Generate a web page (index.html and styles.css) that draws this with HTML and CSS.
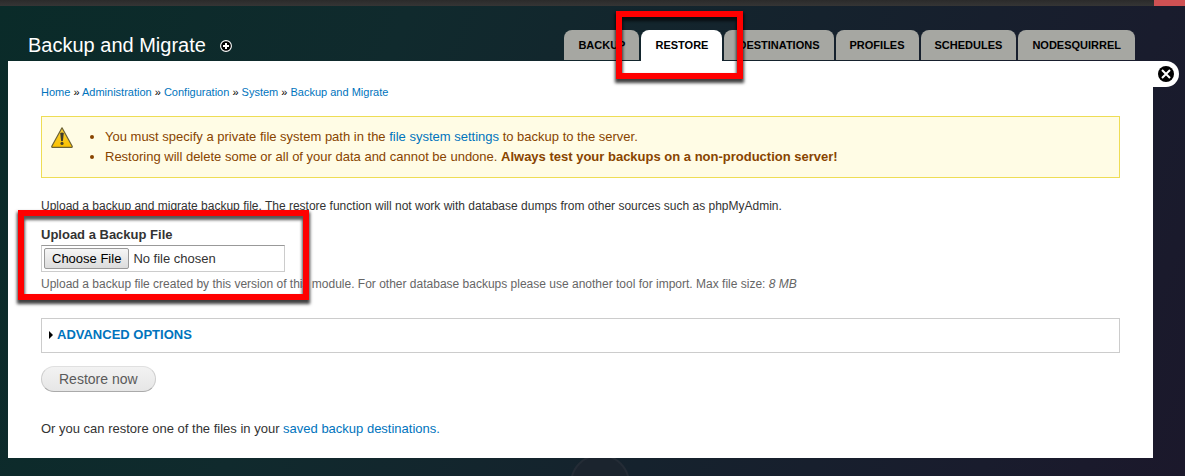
FILE: index.html
```html
<!DOCTYPE html>
<html lang="en">
<head>
<meta charset="utf-8">
<title>Backup and Migrate</title>
<link rel="stylesheet" href="styles.css">
</head>
<body>
<div class="page">
  <div class="toolbar"><div class="toolbar-alert"></div></div>
  <header class="header">
    <div class="title-group">
      <h1 class="title">Backup and Migrate</h1>
      <button class="add-shortcut" type="button" aria-label="Add to shortcuts">
        <svg width="12" height="12" viewBox="0 0 12 12"><circle cx="6" cy="6" r="5.4" fill="#000" stroke="#fff" stroke-width="1.1"/><path d="M6 3v6M3 6h6" stroke="#fff" stroke-width="2"/></svg>
      </button>
    </div>
    <nav>
      <ul class="tabs">
        <li class="tab"><a href="#">BACKUP</a></li>
        <li class="tab tab-active"><a href="#">RESTORE</a><span class="marker marker-tab"></span></li>
        <li class="tab"><a href="#">DESTINATIONS</a></li>
        <li class="tab"><a href="#">PROFILES</a></li>
        <li class="tab"><a href="#">SCHEDULES</a></li>
        <li class="tab"><a href="#">NODESQUIRREL</a></li>
      </ul>
    </nav>
  </header>
  <main class="panel">
    <button class="close" type="button" aria-label="Close">
      <svg width="16" height="16" viewBox="0 0 16 16"><circle cx="8" cy="8" r="8" fill="#000"/><path d="M4 4l8 8M12 4l-8 8" stroke="#fff" stroke-width="2"/></svg>
    </button>
    <nav class="breadcrumb"><a href="#">Home</a> » <a href="#">Administration</a> » <a href="#">Configuration</a> » <a href="#">System</a> » <a href="#">Backup and Migrate</a></nav>
    <div class="warning">
      <svg class="warning-icon" width="22" height="21" viewBox="0 0 22 21">
        <defs><linearGradient id="amber" x1="0" y1="0" x2="0" y2="1"><stop offset="0" stop-color="#f5cd3c"/><stop offset="1" stop-color="#fbc200"/></linearGradient></defs>
        <path d="M11 .8L21.2 19.2Q21.4 20.3 20.4 20.3H1.6Q.6 20.3.8 19.2Z" fill="url(#amber)" stroke="#6b6136" stroke-width="1.2" stroke-linejoin="round"/>
        <path d="M9.2 6Q11 5 12.8 6L11.9 14H10.1Z" fill="#3f3c2c"/><circle cx="11" cy="16.4" r="1.6" fill="#4b452a"/>
      </svg>
      <ul class="warning-list">
        <li>You must specify a private file system path in the <a href="#">file system settings</a> to backup to the server.</li>
        <li>Restoring will delete some or all of your data and cannot be undone. <strong>Always test your backups on a non-production server!</strong></li>
      </ul>
    </div>
    <form>
      <p class="intro">Upload a backup and migrate backup file. The restore function will not work with database dumps from other sources such as phpMyAdmin.</p>
      <div class="field">
        <label class="field-label" for="backup-file">Upload a Backup File</label>
        <input class="file" id="backup-file" type="file">
        <p class="description">Upload a backup file created by this version of this module. For other database backups please use another tool for import. Max file size: <em>8 MB</em></p>
        <span class="marker marker-field"></span>
      </div>
      <details class="advanced">
        <summary><svg width="4" height="8" viewBox="0 0 4 8"><path d="M0 0L4 4L0 8Z" fill="#000"/></svg>ADVANCED OPTIONS</summary>
      </details>
      <button class="submit" type="button">Restore now</button>
    </form>
    <p class="saved">Or you can restore one of the files in your <a href="#">saved backup destinations.</a></p>
  </main>
  <div class="backdrop"><span class="ring"></span></div>
</div>
</body>
</html>
```
FILE: styles.css
```css
* { box-sizing: border-box; }

body {
  margin: 0;
  background: #16212c;
  color: #333;
  font-family: "Liberation Sans", Arial, sans-serif;
  font-size: 13px;
  line-height: 20px;
  text-rendering: optimizeSpeed;
}

a { color: #0074bd; text-decoration: none; }
p { margin: 0; }

.page {
  min-height: 100vh;
  display: flex;
  flex-direction: column;
  overflow: hidden;
  background: linear-gradient(112deg, #0a2b29 0%, #102a2d 30%, #15222d 60%, #191c2d 85%, #1b182b 100%);
}

.toolbar {
  display: flex;
  justify-content: flex-end;
  height: 6px;
  background: linear-gradient(#2b2b2b, #353535);
}
.toolbar-alert { width: 31px; background: #cf5153; }

.header {
  display: flex;
  justify-content: space-between;
  height: 55px;
  padding: 24px 50px 0 28px;
}
.title-group { display: flex; align-items: center; gap: 14px; height: 30px; }
.title { margin: 0; color: #fff; font-size: 20px; font-weight: normal; line-height: 30px; }
.add-shortcut { display: flex; margin-top: 2px; padding: 0; border: 0; background: none; }

.tabs { display: flex; gap: 2px; margin: 0; padding: 0; list-style: none; }
.tab {
  position: relative;
  height: 30px;
  border-radius: 8px 8px 0 0;
  background: #a6a7a2;
}
.tab a {
  display: block;
  padding: 0 14px;
  color: #000;
  font-size: 11px;
  font-weight: bold;
  line-height: 30px;
}
.tab-active { z-index: 1; height: 31px; background: #fff; }

.marker {
  position: absolute;
  border: 6px solid #f00;
  box-shadow: 0 3px 3px 1px rgba(0, 0, 0, .75), inset 0 3px 3px 1px rgba(0, 0, 0, .65);
  pointer-events: none;
}
.marker-tab { inset: -19px -21px -18px -25px; }
.marker-field { top: -16px; left: -23px; width: 291px; height: 90px; }

.panel {
  position: relative;
  margin: 0 32px 0 8px;
  padding: 24px 33px 19px;
  background: #fff;
}
.close {
  position: absolute;
  top: 0;
  left: 100%;
  display: flex;
  padding: 5px;
  border: 0;
  border-radius: 0 13px 13px 0;
  background: #fff;
}

.breadcrumb { color: #000; font-size: 11px; line-height: 14px; }

.warning {
  display: flex;
  align-items: flex-start;
  gap: 32px;
  margin-top: 17px;
  padding: 10px 9px;
  border: 1px solid #ed5;
  background: #fffce5;
  color: #840;
}
.warning-list { margin: 0; padding: 0; }

.intro { margin-top: 19px; font-size: 12px; line-height: 18px; }

.field { position: relative; margin-top: 11px; }
.field-label { display: block; font-weight: bold; line-height: 18px; }
.file {
  display: block;
  width: 244px;
  height: 27px;
  margin-top: 1px;
  padding: 2px;
  border: 1px solid #ccc;
  border-top-color: #999;
  color: #333;
  font: inherit;
}
.file::file-selector-button {
  height: 21px;
  margin: 0 4px 0 0;
  padding: 0 7px;
  border: 1px solid #999;
  border-radius: 2px;
  background: linear-gradient(#f6f6f6, #dcdcdc);
  color: #000;
  font: inherit;
}
.description { margin-top: 3px; color: #666; font-size: 12px; line-height: 18px; }

.advanced { margin-top: 25px; padding: 6px 7px 7px; border: 1px solid #ccc; }
.advanced summary {
  display: flex;
  align-items: center;
  gap: 4px;
  color: #0074bd;
  font-weight: bold;
  list-style: none;
}

.submit {
  display: block;
  height: 26px;
  margin-top: 13px;
  padding: 0 17px;
  border: 1px solid #ddd;
  border-color: #e0e0e0 #ccc #aaa;
  border-radius: 13px;
  background: linear-gradient(#f2f2f2, #e6e6e6);
  color: #5a5a5a;
  font: 14px/20px "Liberation Sans", Arial, sans-serif;
}

.saved { margin-top: 27px; }

.backdrop { position: relative; flex: 1; min-height: 18px; overflow: hidden; }
.ring {
  position: absolute;
  top: -4px;
  left: 570px;
  width: 60px;
  height: 60px;
  border: 2px solid #242c36;
  border-radius: 50%;
  background: #1b242e;
}
```
